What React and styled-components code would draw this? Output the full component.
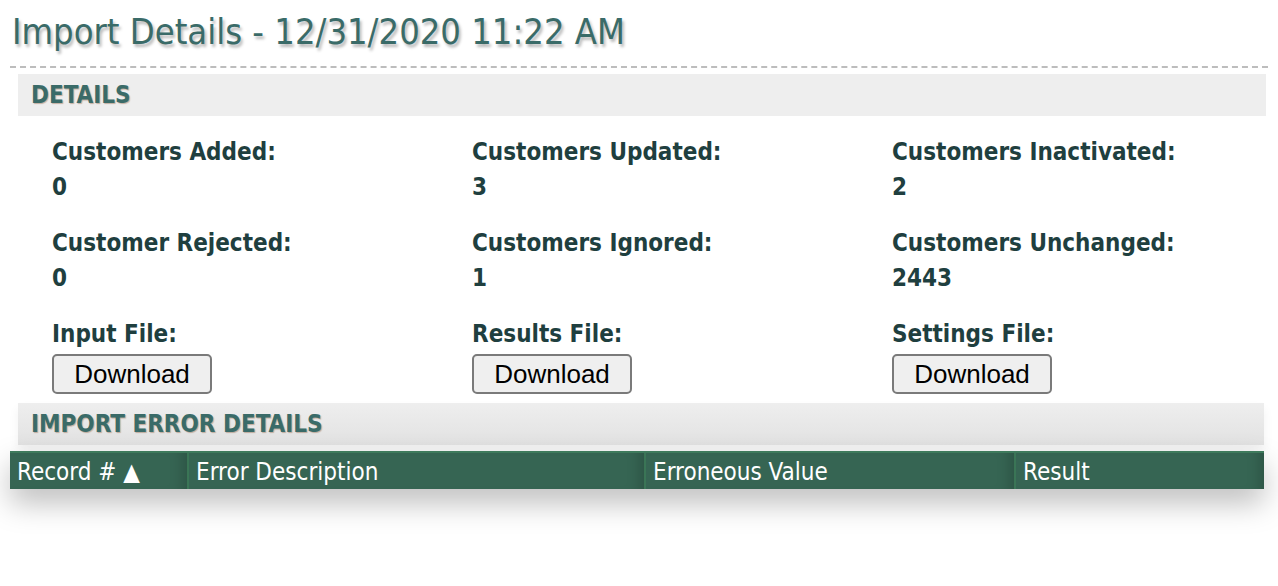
import React from "react";
import styled, { createGlobalStyle } from "styled-components";

const GlobalStyle = createGlobalStyle`
  body {
    margin: 0;
    background: #fff;
    font-family: "DejaVu Sans Condensed", "DejaVu Sans", sans-serif;
  }
`;

const stats = [
  { label: "Customers Added:", value: "0" },
  { label: "Customers Updated:", value: "3" },
  { label: "Customers Inactivated:", value: "2" },
  { label: "Customer Rejected:", value: "0" },
  { label: "Customers Ignored:", value: "1" },
  { label: "Customers Unchanged:", value: "2443" },
];

const files = ["Input File:", "Results File:", "Settings File:"];

const columns = [
  { title: "Record # \u25B2", width: 178 },
  { title: "Error Description", width: 457 },
  { title: "Erroneous Value", width: 370 },
  { title: "Result", width: 249 },
];

const App = () => {
  return (
    <Page>
      <GlobalStyle />
      <Title>Import Details - 12/31/2020 11:22 AM</Title>
      <Divider />
      <SectionBar>DETAILS</SectionBar>
      <StatsGrid>
        {stats.map(s => (
          <Stat key={s.label}>
            <Label>{s.label}</Label>
            <Value>{s.value}</Value>
          </Stat>
        ))}
        {files.map(f => (
          <Stat key={f}>
            <Label>{f}</Label>
            <DownloadButton type="button">Download</DownloadButton>
          </Stat>
        ))}
      </StatsGrid>
      <SectionBar gradient>IMPORT ERROR DETAILS</SectionBar>
      <TableWrap>
        <Table>
          <colgroup>
            {columns.map(c => (
              <col key={c.title} style={{ width: c.width }} />
            ))}
          </colgroup>
          <thead>
            <tr>
              {columns.map(c => (
                <HeadCell key={c.title}>{c.title}</HeadCell>
              ))}
            </tr>
          </thead>
        </Table>
      </TableWrap>
    </Page>
  );
};

export default App;

const Page = styled.div`
  padding: 0 10px 90px;
  min-height: 586px;
  box-sizing: border-box;
`;

const Title = styled.h1`
  margin: 0;
  padding: 12px 0 0 2px;
  height: 54px;
  line-height: 40px;
  font-size: 36px;
  font-weight: normal;
  color: #3a6b68;
  text-shadow: 2px 3px 3px rgba(0, 0, 0, 0.28);
`;

const Divider = styled.div`
  border-top: 2px dashed #bdbdbd;
`;

const SectionBar = styled.div`
  margin: ${p => (p.gradient ? "9px 4px 0 8px" : "6px 2px 0 8px")};
  height: 42px;
  line-height: 42px;
  padding-left: 13px;
  font-size: 24px;
  font-weight: bold;
  color: #3a6b68;
  text-shadow: 1px 1px 1px rgba(120, 60, 20, 0.35);
  background: ${p =>
    p.gradient ? "linear-gradient(#eeeeee, #e2e2e2)" : "#eeeeee"};
  box-shadow: ${p => (p.gradient ? "0 6px 10px rgba(0,0,0,0.06)" : "none")};
`;

const StatsGrid = styled.div`
  display: grid;
  grid-template-columns: repeat(3, 420px);
  row-gap: 21px;
  padding: 19px 0 0 42px;
`;

const Stat = styled.div`
  display: flex;
  flex-direction: column;
  align-items: flex-start;
`;

const Label = styled.div`
  font-size: 24px;
  line-height: 35px;
  font-weight: bold;
  color: #1f3f3f;
`;

const Value = styled.div`
  font-size: 24px;
  line-height: 35px;
  font-weight: bold;
  color: #1f3f3f;
`;

const DownloadButton = styled.button`
  margin-top: 2px;
  width: 160px;
  height: 40px;
  padding: 0;
  font-family: "Liberation Sans", Arial, sans-serif;
  font-size: 26px;
  color: #000;
  background: #efefef;
  border: 2px solid #7a7a7a;
  border-radius: 5px;
`;

const TableWrap = styled.div`
  margin-top: 6px;
  width: 1254px;
  background: #366553;
  box-shadow: 0 14px 30px rgba(0, 0, 0, 0.26);
`;

const Table = styled.table`
  width: 100%;
  border-collapse: collapse;
  table-layout: fixed;
`;

const HeadCell = styled.th`
  height: 34px;
  padding: 2px 0 0 7px;
  text-align: left;
  font-size: 24px;
  line-height: 34px;
  font-weight: normal;
  color: #fff;
  background: #366553;
  border-top: 2px solid #3e7a5c;
  border-left: 2px solid #3a7556;
  box-shadow: inset -14px 0 14px -10px rgba(0, 0, 0, 0.18);
  white-space: nowrap;
  &:first-child {
    border-left: none;
  }
`;
